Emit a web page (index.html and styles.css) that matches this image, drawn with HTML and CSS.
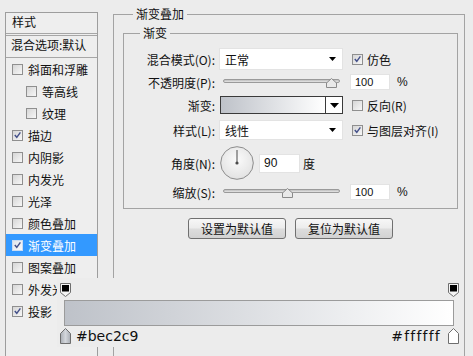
FILE: index.html
```html
<!DOCTYPE html>
<html lang="zh">
<head>
<meta charset="utf-8">
<title>渐变叠加</title>
<link rel="stylesheet" href="styles.css">
</head>
<body>
<div class="app">
  <aside class="sidebar">
    <div class="side-head">样式</div>
    <div class="side-blend">混合选项:默认</div>
    <ul class="side-list">
      <li class="item"><span class="cb"></span>斜面和浮雕</li>
      <li class="item sub"><span class="cb"></span>等高线</li>
      <li class="item sub"><span class="cb"></span>纹理</li>
      <li class="item"><span class="cb"><svg viewBox="0 0 10 10" width="10" height="10"><path d="M2 5 L4.2 7.6 L8.2 2" fill="none" stroke="#44508a" stroke-width="1.6"/></svg></span>描边</li>
      <li class="item"><span class="cb"></span>内阴影</li>
      <li class="item"><span class="cb"></span>内发光</li>
      <li class="item"><span class="cb"></span>光泽</li>
      <li class="item"><span class="cb"></span>颜色叠加</li>
      <li class="item selected"><span class="cb"><svg viewBox="0 0 10 10" width="10" height="10"><path d="M2 5 L4.2 7.6 L8.2 2" fill="none" stroke="#44508a" stroke-width="1.6"/></svg></span>渐变叠加</li>
      <li class="item"><span class="cb"></span>图案叠加</li>
      <li class="item"><span class="cb"></span>外发光</li>
      <li class="item"><span class="cb"><svg viewBox="0 0 10 10" width="10" height="10"><path d="M2 5 L4.2 7.6 L8.2 2" fill="none" stroke="#44508a" stroke-width="1.6"/></svg></span>投影</li>
    </ul>
  </aside>

  <main class="main">
    <fieldset class="group outer">
      <legend>渐变叠加</legend>
      <fieldset class="group inner">
        <legend>渐变</legend>

        <div class="row r1">
          <span class="lbl">混合模式(O):</span>
          <div class="select sel-1"><span>正常</span><svg class="arrow" viewBox="0 0 7 4" width="7" height="4"><path d="M0 0 H7 L3.5 4 Z" fill="#000"/></svg></div>
          <span class="opt"><span class="cb"><svg viewBox="0 0 10 10" width="10" height="10"><path d="M2 5 L4.2 7.6 L8.2 2" fill="none" stroke="#44508a" stroke-width="1.6"/></svg></span>仿色</span>
        </div>

        <div class="row r2">
          <span class="lbl">不透明度(P):</span>
          <div class="slider">
            <div class="track"></div>
            <svg class="thumb" style="left:107px" viewBox="0 0 11 10" width="11" height="10"><path d="M5.5 0.5 L10.5 5 V9.5 H0.5 V5 Z" fill="#e9e9e9" stroke="#8a8a8a"/></svg>
          </div>
          <span class="num">100</span>
          <span class="unit">%</span>
        </div>

        <div class="row r3">
          <span class="lbl">渐变:</span>
          <div class="gradbox">
            <div class="gradfill"></div>
            <div class="gradbtn"><svg viewBox="0 0 9 5" width="9" height="5"><path d="M0 0 H9 L4.5 5 Z" fill="#000"/></svg></div>
          </div>
          <span class="opt"><span class="cb"></span>反向(R)</span>
        </div>

        <div class="row r4">
          <span class="lbl">样式(L):</span>
          <div class="select sel-2"><span>线性</span><svg class="arrow" viewBox="0 0 7 4" width="7" height="4"><path d="M0 0 H7 L3.5 4 Z" fill="#000"/></svg></div>
          <span class="opt"><span class="cb"><svg viewBox="0 0 10 10" width="10" height="10"><path d="M2 5 L4.2 7.6 L8.2 2" fill="none" stroke="#44508a" stroke-width="1.6"/></svg></span>与图层对齐(I)</span>
        </div>

        <div class="row r5">
          <span class="lbl">角度(N):</span>
          <svg class="dial" viewBox="0 0 34 34" width="34" height="34">
            <defs>
              <radialGradient id="dg" cx="50%" cy="40%" r="60%">
                <stop offset="0" stop-color="#fbfbfb"/>
                <stop offset="1" stop-color="#e2e2e2"/>
              </radialGradient>
            </defs>
            <circle cx="17" cy="17" r="16.3" fill="url(#dg)" stroke="#8c8c8c"/>
            <line x1="17" y1="4" x2="17" y2="17" stroke="#4a4a4a" stroke-width="1"/>
            <circle cx="17" cy="17" r="1.6" fill="#4a4a4a"/>
          </svg>
          <span class="num num-angle">90</span>
          <span class="unit unit-deg">度</span>
        </div>

        <div class="row r6">
          <span class="lbl">缩放(S):</span>
          <div class="slider">
            <div class="track"></div>
            <svg class="thumb" style="left:63px" viewBox="0 0 11 10" width="11" height="10"><path d="M5.5 0.5 L10.5 5 V9.5 H0.5 V5 Z" fill="#e9e9e9" stroke="#8a8a8a"/></svg>
          </div>
          <span class="num">100</span>
          <span class="unit">%</span>
        </div>
      </fieldset>

      <div class="btns">
        <button class="btn" type="button">设置为默认值</button>
        <button class="btn" type="button">复位为默认值</button>
      </div>
    </fieldset>
  </main>

  <div class="grad-editor">
    <div class="stops-top">
      <svg viewBox="0 0 11 14" width="11" height="14"><path d="M0.5 0.5 H10.5 V9.5 L5.5 13.5 L0.5 9.5 Z" fill="#f4f4f4" stroke="#6e6e6e"/><rect x="2" y="2" width="7" height="6.5" fill="#000"/></svg>
      <svg viewBox="0 0 11 14" width="11" height="14"><path d="M0.5 0.5 H10.5 V9.5 L5.5 13.5 L0.5 9.5 Z" fill="#f4f4f4" stroke="#6e6e6e"/><rect x="2" y="2" width="7" height="6.5" fill="#000"/></svg>
    </div>
    <div class="bar"></div>
    <div class="stops-bottom">
      <div class="stop-group">
        <svg viewBox="0 0 11 16" width="11" height="16"><defs><linearGradient id="sg" x1="0" y1="0" x2="1" y2="0"><stop offset="0" stop-color="#a9adb4"/><stop offset="0.5" stop-color="#d4d7dc"/><stop offset="1" stop-color="#a9adb4"/></linearGradient></defs><path d="M5.5 0.5 L10.5 5.5 V15.5 H0.5 V5.5 Z" fill="url(#sg)" stroke="#6e6e6e"/></svg>
        <span class="hex hex-left">#bec2c9</span>
      </div>
      <div class="stop-group">
        <span class="hex hex-right">#ffffff</span>
        <svg viewBox="0 0 11 16" width="11" height="16"><path d="M5.5 0.5 L10.5 5.5 V15.5 H0.5 V5.5 Z" fill="#ffffff" stroke="#6e6e6e"/></svg>
      </div>
    </div>
  </div>
</div>
</body>
</html>
```

FILE: styles.css
```css
* { box-sizing: border-box; }

html, body {
  margin: 0;
  padding: 0;
}

body {
  width: 473px;
  height: 356px;
  overflow: hidden;
  background: #ececec;
  font-family: "Noto Sans CJK SC", "Noto Sans", sans-serif;
  font-size: 12px;
  color: #111;
}

.app {
  position: relative;
  display: flex;
  align-items: flex-start;
  height: 356px;
  overflow: hidden;
  padding: 6px 0 0 5px;
}

/* ---------- sidebar ---------- */
.sidebar {
  flex: none;
  width: 93px;
  height: 344px;
  margin-top: 6px;
  border: 1px solid #9d9d9d;
  border-bottom: 0;
  background: #eeeeee;
  overflow: hidden;
}

.side-head {
  height: 21px;
  line-height: 18px;
  padding-left: 6px;
  border-bottom: 1px solid #a6a6a6;
}

.side-blend {
  height: 23px;
  margin-top: 1px;
  line-height: 18px;
  padding-left: 5px;
  border-top: 1px solid #a6a6a6;
  border-bottom: 1px solid #a6a6a6;
  white-space: nowrap;
  overflow: hidden;
}

.side-list {
  list-style: none;
  margin: 0;
  padding: 0;
}

.item {
  display: flex;
  align-items: center;
  height: 22px;
  padding-left: 6px;
  white-space: nowrap;
}

.item.sub { padding-left: 20px; }

.item.selected {
  background: #3399ff;
  color: #fff;
}

.cb {
  flex: none;
  display: inline-flex;
  align-items: center;
  justify-content: center;
  width: 11px;
  height: 11px;
  margin-right: 5px;
  border: 1px solid #8f8f8f;
  background: linear-gradient(135deg, #d6d6d6, #f7f7f7);
}

.cb svg { display: block; }

.item.selected .cb {
  border-color: #c9dcf3;
  background: linear-gradient(135deg, #dfe4ea, #fbfbfb);
}

/* ---------- main ---------- */
.main {
  flex: none;
  margin-left: 15px;
}

.group {
  margin: 0;
  min-width: 0;
  border: 1px solid #a3a3a3;
}

.group > legend {
  padding: 0 3px;
  line-height: 16px;
  font-size: 12px;
}

.outer {
  width: 352px;
  height: 350px;
  padding: 3px 6px 0 9px;
  border-bottom: 0;
}

.outer > legend { margin-left: 10px; }

.inner {
  padding: 7px 0 8px 0;
}

.inner > legend { margin-left: 16px; }

.row {
  display: flex;
  align-items: center;
  white-space: nowrap;
}

.r1 { height: 22px; }
.r2 { height: 16px; margin-top: 4px; }
.r3 { height: 18px; margin-top: 6px; }
.r4 { height: 20px; margin-top: 6px; }
.r5 { height: 34px; margin-top: 6px; }
.r6 { height: 16px; margin-top: 4px; }

.lbl {
  flex: none;
  width: 91px;
  margin-right: 4px;
  text-align: right;
}

.select {
  flex: none;
  display: flex;
  align-items: center;
  justify-content: space-between;
  width: 124px;
  background: #fff;
  border: 1px solid #e3e3e3;
  padding: 0 6px 0 5px;
}

.sel-1 { height: 22px; }
.sel-2 { height: 20px; }

.arrow { display: block; }

.opt {
  display: flex;
  align-items: center;
  margin-left: 9px;
}

.opt .cb { margin-right: 4px; }

.slider {
  position: relative;
  flex: none;
  display: flex;
  align-items: center;
  width: 124px;
  height: 16px;
  padding: 0 3px 0 4px;
}

.track {
  flex: 1;
  height: 4px;
  margin-top: -2px;
  border: 1px solid #9a9a9a;
  border-radius: 2px;
  background: linear-gradient(#bdbdbd, #e6e6e6);
}

.thumb {
  position: absolute;
  top: 4px;
  display: block;
}

.num {
  flex: none;
  width: 40px;
  height: 16px;
  margin-left: 7px;
  padding-left: 4px;
  background: #fff;
  border: 1px solid #e3e3e3;
  font-family: "Liberation Sans", sans-serif;
  font-size: 11px;
  line-height: 14px;
}

.num-angle {
  width: 41px;
  height: 19px;
  margin-left: 5px;
  line-height: 17px;
  font-size: 12px;
}

.unit { margin-left: 7px; font-family: "Liberation Sans", sans-serif; font-size: 12px; }
.unit-deg { margin-left: 3px; font-family: "Noto Sans CJK SC", sans-serif; }

.gradbox {
  flex: none;
  display: flex;
  width: 123px;
  height: 18px;
  margin-left: 1px;
  border: 1px solid #3a3a3a;
}

.gradfill {
  flex: 1;
  background: linear-gradient(90deg, #bec2c9, #ffffff);
}

.gradbtn {
  flex: none;
  display: flex;
  align-items: center;
  justify-content: center;
  width: 17px;
  border-left: 1px solid #3a3a3a;
  background: #fff;
}

.gradbtn svg { display: block; }

.dial {
  flex: none;
  display: block;
  margin-left: 1px;
}

.btns {
  display: flex;
  gap: 9px;
  margin-top: 9px;
  padding-left: 65px;
}

.btn {
  width: 98px;
  height: 21px;
  padding: 0;
  border: 1px solid #707070;
  border-radius: 3px;
  background: linear-gradient(#f7f7f7, #ececec 48%, #dddddd 52%, #d2d2d2);
  font-family: "Noto Sans CJK SC", sans-serif;
  font-size: 12px;
  line-height: 18px;
  color: #111;
}

/* ---------- gradient editor overlay ---------- */
.grad-editor {
  position: absolute;
  left: 57px;
  top: 278px;
  width: 407px;
  height: 69px;
  padding: 5px 5px 0 3px;
  background: #ececec;
  display: flex;
  flex-direction: column;
}

.stops-top {
  display: flex;
  justify-content: space-between;
  height: 14px;
}

.stops-top svg, .stops-bottom svg { display: block; }

.bar {
  height: 26px;
  margin: 3px 5px 0 4px;
  border: 1px solid #9b9b9b;
  background: linear-gradient(90deg, #bec2c9, #ffffff);
}

.stops-bottom {
  display: flex;
  justify-content: space-between;
  height: 16px;
  margin-top: 2px;
}

.stop-group {
  display: flex;
  align-items: flex-end;
}

.hex {
  font-family: "DejaVu Sans", sans-serif;
  font-size: 14px;
  line-height: 16px;
  color: #111;
}

.hex-left { margin-left: 5px; }
.hex-right { margin-right: 7px; letter-spacing: 1.2px; }
```
